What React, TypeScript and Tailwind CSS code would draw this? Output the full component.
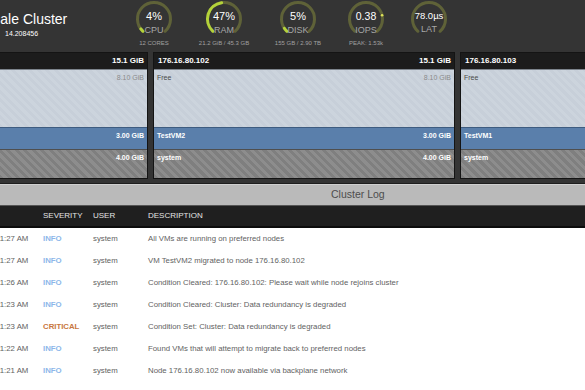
import React from 'react';

type Gauge = {
  value: string;
  label: string;
  sub: string;
  pct: number;
  peak?: number;
  valueClass: string;
  colClass: string;
};

const gauges: Gauge[] = [
  { value: '4%', label: 'CPU', sub: '12 CORES', pct: 0.04, valueClass: 'text-[11px]', colClass: 'ml-0' },
  { value: '47%', label: 'RAM', sub: '21.2 GiB / 45.3 GB', pct: 0.47, valueClass: 'text-[11px]', colClass: 'ml-[6px]' },
  { value: '5%', label: 'DISK', sub: '155 GB / 2.90 TB', pct: 0.05, valueClass: 'text-[11px]', colClass: 'ml-[10px]' },
  { value: '0.38', label: 'IOPS', sub: 'PEAK: 1.53k', pct: 0, peak: 77, valueClass: 'text-[10.5px]', colClass: 'ml-[4px]' },
  { value: '78.0µs', label: 'LAT', sub: '', pct: 0, valueClass: 'text-[9.5px]', colClass: 'ml-[-1px]' },
];

const START = -138;
const SWEEP = 276;

const polar = (cx: number, cy: number, r: number, a: number) => {
  const rad = (a * Math.PI) / 180;
  return [cx + r * Math.sin(rad), cy - r * Math.cos(rad)];
};

const arcPath = (cx: number, cy: number, r: number, a0: number, a1: number) => {
  const [x0, y0] = polar(cx, cy, r, a0);
  const [x1, y1] = polar(cx, cy, r, a1);
  const large = a1 - a0 > 180 ? 1 : 0;
  return `M${x0} ${y0} A${r} ${r} 0 ${large} 1 ${x1} ${y1}`;
};

function GaugeDial({ g }: { g: Gauge }) {
  const peak = g.peak !== undefined ? polar(20, 20, 16.5, g.peak) : null;
  return (
    <div className={`w-[64px] shrink-0 flex flex-col items-center ${g.colClass}`}>
      <div className="relative w-[40px] h-[40px] -mt-[1px] flex flex-col items-center">
        <svg width="40" height="40" viewBox="0 0 40 40" className="absolute inset-0">
          <path d={arcPath(20, 20, 16.5, START, START + SWEEP)} fill="none" stroke="#5f6238" strokeWidth="3" strokeLinecap="round" />
          {g.pct > 0 && (
            <path d={arcPath(20, 20, 16.5, START, START + SWEEP * g.pct)} fill="none" stroke="#b4d23a" strokeWidth="3" strokeLinecap="round" />
          )}
          {peak && <circle cx={peak[0]} cy={peak[1]} r="1.3" fill="#dfe35a" />}
        </svg>
        <span className={`relative mt-[12px] leading-none text-white ${g.valueClass}`}>{g.value}</span>
        <span className="relative mt-[4px] leading-none text-[9px] text-[#a8a8a8]">{g.label}</span>
      </div>
      <span className="mt-[1px] text-[6px] leading-none text-[#a0a0a0] whitespace-nowrap">{g.sub}</span>
    </div>
  );
}

const nodes = [
  { ip: '176.16.80.101', vm: 'TestVM3' },
  { ip: '176.16.80.102', vm: 'TestVM2' },
  { ip: '176.16.80.103', vm: 'TestVM1' },
];

function NodePanel({ ip, vm }: { ip: string; vm: string }) {
  return (
    <div className="w-[302px] shrink-0 border border-[#141414] flex flex-col text-[7px]">
      <div className="h-[16px] bg-[#1c1c1c] flex items-center justify-between pl-[4px] pr-[3px] text-white font-bold text-[8px]">
        <span>{ip}</span>
        <span>15.1 GiB</span>
      </div>
      <div className="h-[58px] border-t border-[#7d848c] bg-[repeating-linear-gradient(45deg,#c7cfd9_0_3px,#ccd4dd_3px_6px)] flex justify-between items-start pl-[3px] pr-[3px] pt-[3px]">
        <span className="text-[#4b4b4b]">Free</span>
        <span className="text-[#8a8a8a]">8.10 GiB</span>
      </div>
      <div className="h-[22px] border-t border-[#3e5c80] bg-[#5a7fab] flex justify-between items-start pl-[3px] pr-[3px] pt-[3px] text-white font-bold">
        <span>{vm}</span>
        <span>3.00 GiB</span>
      </div>
      <div className="h-[29px] border-t border-[#4f4f4f] bg-[repeating-linear-gradient(45deg,#7f7f7f_0_3px,#8d8d8d_3px_6px)] flex justify-between items-start pl-[3px] pr-[3px] pt-[3px] text-white font-bold">
        <span>system</span>
        <span>4.00 GiB</span>
      </div>
    </div>
  );
}

const logs = [
  { time: '11:27 AM', sev: 'INFO', desc: 'All VMs are running on preferred nodes' },
  { time: '11:27 AM', sev: 'INFO', desc: 'VM TestVM2 migrated to node 176.16.80.102' },
  { time: '11:26 AM', sev: 'INFO', desc: 'Condition Cleared: 176.16.80.102: Please wait while node rejoins cluster' },
  { time: '11:23 AM', sev: 'INFO', desc: 'Condition Cleared: Cluster: Data redundancy is degraded' },
  { time: '11:23 AM', sev: 'CRITICAL', desc: 'Condition Set: Cluster: Data redundancy is degraded' },
  { time: '11:22 AM', sev: 'INFO', desc: 'Found VMs that will attempt to migrate back to preferred nodes' },
  { time: '11:21 AM', sev: 'INFO', desc: 'Node 176.16.80.102 now available via backplane network' },
  { time: '11:21 AM', sev: 'INFO', desc: 'Node 176.16.80.102 now available via LAN' },
];

export default function App() {
  return (
    <div className="w-[585px] h-[390px] overflow-hidden bg-white font-['Liberation_Sans',Arial,sans-serif]">
      {/* top bar */}
      <div className="h-[48px] bg-[#343434] flex items-start">
        <div className="w-[122px] shrink-0 overflow-hidden pt-[12px]">
          <div className="-ml-[16px] text-[14px] leading-none text-white whitespace-nowrap">Scale Cluster</div>
          <div className="pl-[5px] mt-[4px] text-[7px] leading-none text-white">14.208456</div>
        </div>
        {gauges.map(g => (
          <GaugeDial key={g.label} g={g} />
        ))}
      </div>

      {/* nodes */}
      <div className="bg-[#343434] pt-[4px] pb-[4px] border-b border-[#1e1e1e] overflow-hidden">
        <div className="flex gap-[5px] -ml-[154px]">
          {nodes.map(n => (
            <NodePanel key={n.ip} ip={n.ip} vm={n.vm} />
          ))}
        </div>
      </div>

      {/* log */}
      <div className="h-[21px] bg-[#bababa] border-t border-[#d0d0d0] flex items-center pl-[331px] text-[10.5px] text-[#4d4d4d]">
        Cluster Log
      </div>
      <div className="h-[23px] bg-[#1f1f1f] border-t border-[#555] border-b-2 border-b-[#0c0c0c] flex items-center -ml-[4px] text-[8px] text-[#e4e4e4]">
        <span className="w-[47px] shrink-0"></span>
        <span className="w-[50px] shrink-0">SEVERITY</span>
        <span className="w-[55px] shrink-0">USER</span>
        <span>DESCRIPTION</span>
      </div>
      <div className="flex flex-col">
        {logs.map((l, i) => (
          <div key={i} className="h-[22px] flex items-center -ml-[4px] text-[7.8px] text-[#626262] whitespace-nowrap">
            <span className="w-[47px] shrink-0">{l.time}</span>
            <span className={`w-[50px] shrink-0 font-bold ${l.sev === 'CRITICAL' ? 'text-[#c8773f]' : 'text-[#8db7ea]'}`}>{l.sev}</span>
            <span className="w-[55px] shrink-0">system</span>
            <span>{l.desc}</span>
          </div>
        ))}
      </div>
    </div>
  );
}
